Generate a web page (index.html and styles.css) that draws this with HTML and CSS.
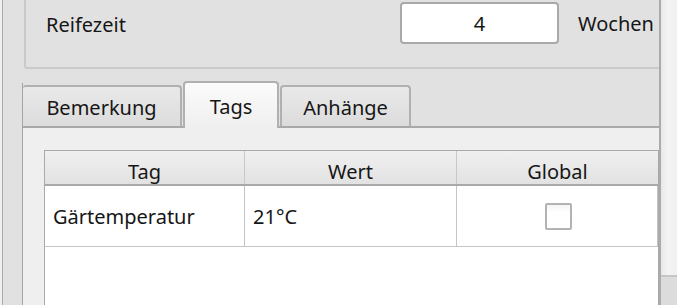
FILE: index.html
```html
<!DOCTYPE html>
<html lang="de">
<head>
<meta charset="utf-8">
<link rel="stylesheet" href="styles.css">
</head>
<body>
<div class="window">
  <div class="frame">
    <div class="groupbox">
      <div class="field-row">
        <span class="label">Reifezeit</span>
        <div class="input">4</div>
        <span class="unit">Wochen</span>
      </div>
    </div>
    <div class="tabpane">
      <div class="tabbar">
        <div class="tab t1">Bemerkung</div>
        <div class="tab t2 selected">Tags</div>
        <div class="tab t3">Anhänge</div>
      </div>
      <div class="tabcontent">
        <div class="table">
          <div class="thead">
            <div class="th c1">Tag</div>
            <div class="th c2">Wert</div>
            <div class="th c3">Global</div>
          </div>
          <div class="tr">
            <div class="td c1">Gärtemperatur</div>
            <div class="td c2">21°C</div>
            <div class="td c3 center"><span class="checkbox"></span></div>
          </div>
        </div>
      </div>
    </div>
  </div>
  <div class="scrollbar">
    <div class="track"></div>
    <div class="thumb"></div>
  </div>
</div>
</body>
</html>
```

FILE: styles.css
```css
* { box-sizing: border-box; }
html, body {
  margin: 0;
  padding: 0;
  width: 677px;
  height: 305px;
  overflow: hidden;
  background: #f0f0f0;
  font-family: "Noto Sans", "Open Sans", sans-serif;
  font-size: 20px;
  color: #161616;
}
.window {
  display: flex;
  height: 305px;
}
.frame {
  margin-left: 2px;
  width: 659px;
  height: 305px;
  flex-shrink: 0;
  border-left: 1px solid #ababab;
  border-right: 2px solid #ababab;
  background: #e1e1e1;
  display: flex;
  flex-direction: column;
  overflow: hidden;
}
.groupbox {
  flex-shrink: 0;
  margin-left: 21px;
  margin-top: -30px;
  height: 99px;
  border: 2px solid #cacaca;
  border-right: none;
  border-top-left-radius: 3px;
  border-bottom-left-radius: 3px;
  display: flex;
  align-items: flex-end;
  padding-bottom: 23px;
}
.field-row {
  display: flex;
  align-items: center;
  height: 42px;
}
.label {
  margin-left: 20px;
  width: 354px;
  padding-top: 3px;
}
.input {
  width: 159px;
  height: 42px;
  background: #fff;
  border: 2px solid #a9a9a9;
  border-radius: 4px;
  display: flex;
  align-items: center;
  justify-content: center;
}
.unit {
  margin-left: 19px;
}
.tabpane {
  flex-shrink: 0;
  margin-left: 19px;
  margin-top: 14px;
  border-left: 1px solid #a5a5a5;
  display: flex;
  flex-direction: column;
}
.tabbar {
  flex-shrink: 0;
  display: flex;
  align-items: flex-end;
  height: 45px;
  border-bottom: 2px solid #a9a9a9;
}
.tab {
  height: 41px;
  border: 2px solid #b0b0b0;
  border-bottom: none;
  border-radius: 4px 4px 0 0;
  background: linear-gradient(#e9e9e9, #dcdcdc);
  display: flex;
  align-items: center;
  justify-content: center;
  padding-top: 2px;
  margin-right: 1px;
}
.t1 { width: 159px; border-left: none; border-top-left-radius: 3px; }
.t2 { width: 96px; }
.t3 { width: 131px; }
.tab.selected {
  height: 47px;
  margin-bottom: -2px;
  background: linear-gradient(#fbfbfb, #efefef);
  padding-top: 2px;
  padding-bottom: 0;
}
.tabcontent {
  background: #efefef;
  padding: 22px 0 0 21px;
}
.table {
  width: 616px;
  height: 200px;
  background: #fff;
  border: 1px solid #a9a9a9;
  border-right: 2px solid #a9a9a9;
}
.thead {
  display: flex;
  height: 35px;
  background: linear-gradient(#f0f0f0, #e2e2e2);
  border-bottom: 2px solid #a9a9a9;
}
.th {
  display: flex;
  align-items: center;
  justify-content: center;
  padding-top: 8px;
  border-right: 1px solid #c8c8c8;
}
.th.c3 { border-right: none; }
.c1 { width: 200px; }
.c2 { width: 212px; }
.c3 { flex: 1; }
.tr {
  display: flex;
  height: 61px;
  border-bottom: 1px solid #c4c4c4;
}
.td {
  display: flex;
  align-items: center;
  padding-left: 8px;
  border-right: 1px solid #c4c4c4;
}
.td.center { justify-content: center; padding-left: 0; }
.checkbox {
  width: 27px;
  height: 27px;
  border: 2px solid #b3b3b3;
  border-radius: 2px;
  background: linear-gradient(#f4f4f4, #fff 30%);
  margin-left: 2px;
}
.scrollbar {
  width: 16px;
  display: flex;
  flex-direction: column;
}
.track {
  height: 275px;
  background: linear-gradient(90deg, #e8e8e8, #f4f4f4 40%, #f0f0f0);
}
.thumb {
  flex: 1;
  border-top: 2px solid #c6c6c6;
  background: #dcdcdc;
}
```
